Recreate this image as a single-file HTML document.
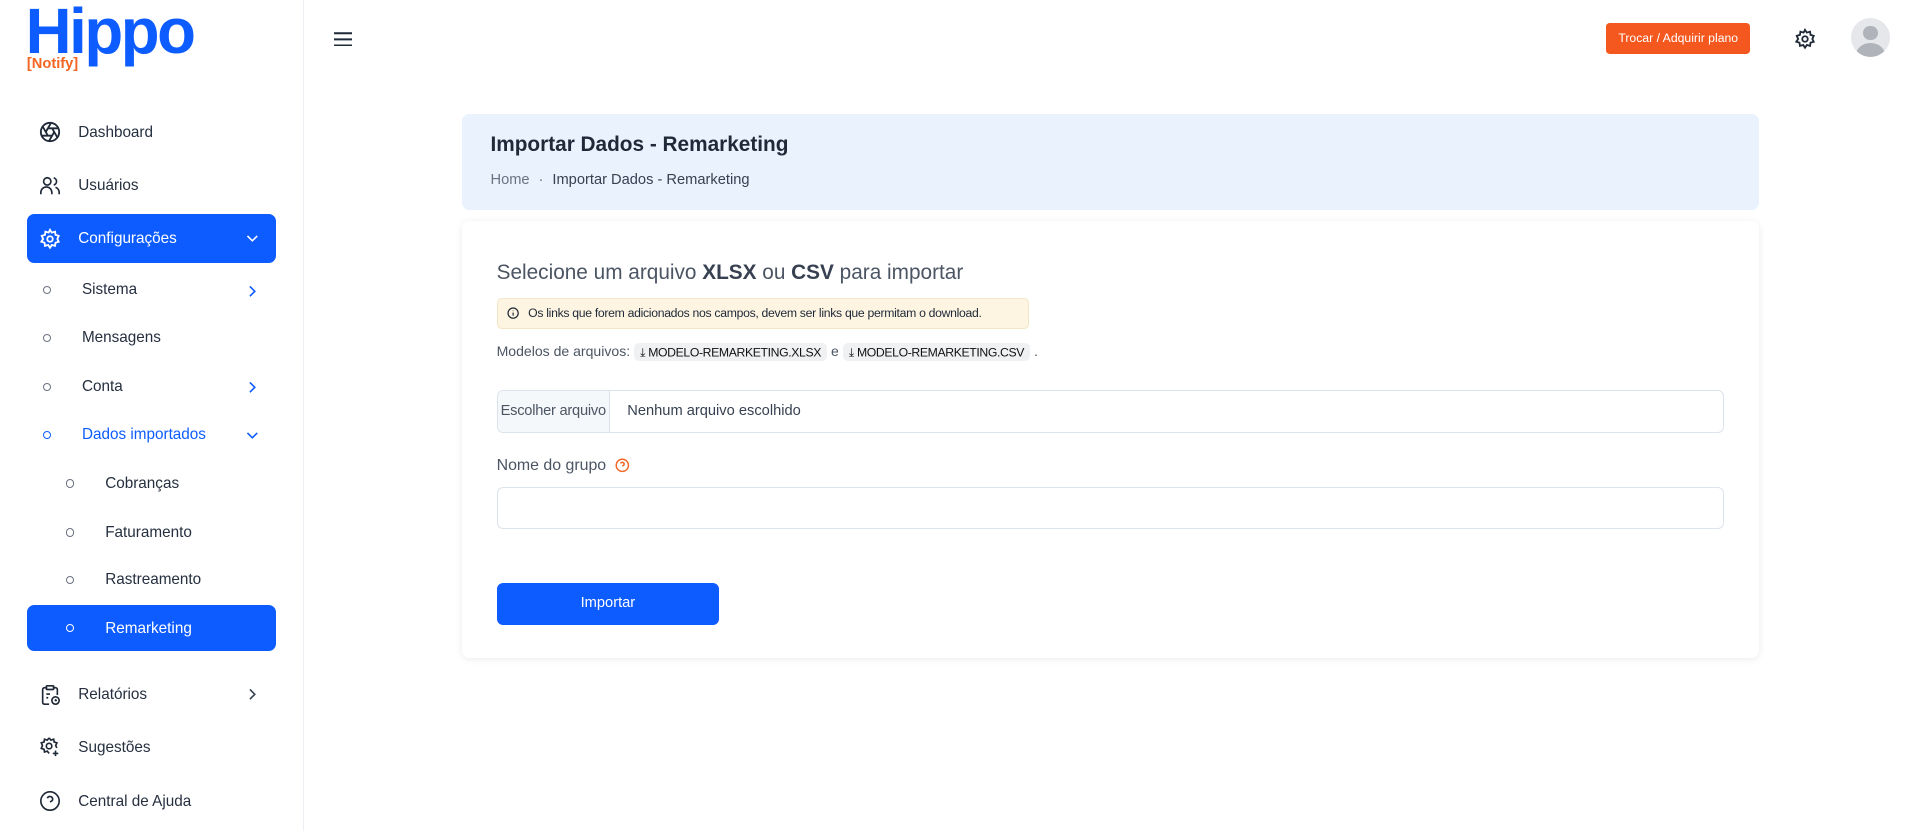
<!DOCTYPE html>
<html><head><meta charset="utf-8">
<style>
html,body{margin:0;padding:0;background:#fff;}
body{width:1568px;height:679px;zoom:1.2232;position:relative;overflow:hidden;font-family:"Liberation Sans",sans-serif;color:#374151;}
.abs{position:absolute;white-space:nowrap;}
.side{left:0;top:0;width:248px;height:679px;border-right:1px solid #eceff3;background:#fff;}
.mi{position:absolute;left:22px;width:204px;height:40px;font-size:12.5px;color:#252f3f;}
.mi .ic{position:absolute;left:10px;top:11px;width:18px;height:18px;}
.mi .t{position:absolute;left:42px;top:13px;}
.act{background:#0d5cff;color:#fff;border-radius:6px;}
.sub .c{position:absolute;top:17px;width:5px;height:5px;border:1px solid #6b7280;border-radius:50%;}
.chev{position:absolute;right:14px;top:14px;}
</style></head><body>
<div class="abs side">
  <div class="abs" style="left:21px;top:-4px;font-size:52px;font-weight:bold;color:#0d5cff;letter-spacing:-2px;">Hippo</div>
  <div class="abs" style="left:22px;top:46px;font-size:12px;font-weight:bold;color:#f26522;background:#fff;padding-right:2px;">[Notify]</div>

  <div class="mi" style="top:88px"><svg class="ic" viewBox="0 0 24 24" fill="none" stroke="#1f2937" stroke-width="2"><circle cx="12" cy="12" r="10"/><path d="M14.3 8l5.7 9.9M9.7 8h11.5M7.4 12l5.7-9.9M9.7 16L4 6.1M14.3 16H2.8M16.6 12l-5.7 9.9"/></svg><span class="t">Dashboard</span></div>
  <div class="mi" style="top:132px"><svg class="ic" viewBox="0 0 24 24" fill="none" stroke="#1f2937" stroke-width="1.8"><circle cx="9" cy="7" r="4"/><path d="M2 21v-2a6 6 0 0 1 12 0v2M16 3.1a4 4 0 0 1 0 7.8M22 21v-2a6 6 0 0 0-4-5.6"/></svg><span class="t">Usuários</span></div>
  <div class="mi act" style="top:175px"><svg class="ic" viewBox="0 0 24 24" fill="none" stroke="#fff" stroke-width="2"><circle cx="12" cy="12" r="3"/><path d="M12 2l2 3 3.5-1 .5 3.5 3.5 1-1.5 3.5 1.5 3-3.5 1-.5 3.5-3.5-1-2 3-2-3-3.5 1-.5-3.5-3.5-1L4.5 12 3 8.5l3.5-1L7 4l3.5 1z"/></svg><span class="t">Configurações</span><svg class="chev" width="12" height="12" viewBox="0 0 12 12" fill="none" stroke="#fff" stroke-width="1.3"><path d="M2 4l4 4 4-4"/></svg></div>

  <div class="mi sub" style="top:217px"><span class="c" style="left:13px"></span><span class="t" style="left:45px">Sistema</span><svg class="chev" width="12" height="12" viewBox="0 0 12 12" fill="none" stroke="#0d5cff" stroke-width="1.3" style="top:15px"><path d="M4 2l4 4-4 4"/></svg></div>
  <div class="mi sub" style="top:256px"><span class="c" style="left:13px"></span><span class="t" style="left:45px">Mensagens</span></div>
  <div class="mi sub" style="top:296px"><span class="c" style="left:13px"></span><span class="t" style="left:45px">Conta</span><svg class="chev" width="12" height="12" viewBox="0 0 12 12" fill="none" stroke="#0d5cff" stroke-width="1.3" style="top:15px"><path d="M4 2l4 4-4 4"/></svg></div>
  <div class="mi sub" style="top:335px;color:#0d5cff"><span class="c" style="left:13px;border-color:#0d5cff"></span><span class="t" style="left:45px">Dados importados</span><svg class="chev" width="12" height="12" viewBox="0 0 12 12" fill="none" stroke="#0d5cff" stroke-width="1.3" style="top:15px"><path d="M2 4l4 4 4-4"/></svg></div>
  <div class="mi sub" style="top:375px"><span class="c" style="left:32px"></span><span class="t" style="left:64px">Cobranças</span></div>
  <div class="mi sub" style="top:415px"><span class="c" style="left:32px"></span><span class="t" style="left:64px">Faturamento</span></div>
  <div class="mi sub" style="top:454px"><span class="c" style="left:32px"></span><span class="t" style="left:64px">Rastreamento</span></div>
  <div class="mi sub act" style="top:495px;height:37px"><span class="c" style="left:32px;top:15px;border-color:#fff"></span><span class="t" style="left:64px;top:12px">Remarketing</span></div>

  <div class="mi" style="top:548px"><svg class="ic" viewBox="0 0 24 24" fill="none" stroke="#1f2937" stroke-width="1.8"><path d="M9 4H6a2 2 0 0 0-2 2v14a2 2 0 0 0 2 2h5M15 4h3a2 2 0 0 1 2 2v6"/><rect x="8" y="2" width="8" height="4" rx="1"/><path d="M8 11h4M8 15h2"/><circle cx="18" cy="18" r="4"/><path d="M18 16.5V18h1.5"/></svg><span class="t">Relatórios</span><svg class="chev" width="12" height="12" viewBox="0 0 12 12" fill="none" stroke="#374151" stroke-width="1.3" style="top:14px"><path d="M4 2l4 4-4 4"/></svg></div>
  <div class="mi" style="top:591px"><svg class="ic" viewBox="0 0 24 24" fill="none" stroke="#1f2937" stroke-width="1.8"><circle cx="11" cy="11" r="3"/><path d="M11 2l2 2.5 3-1 .5 3 3 1-1.3 3 1.3 2.5M11 2L9 4.5l-3-1-.5 3-3 1 1.3 3-1.3 3 3 1 .5 3 3-1 2 2.5M18 16v6M15 19h6"/></svg><span class="t">Sugestões</span></div>
  <div class="mi" style="top:635px"><svg class="ic" viewBox="0 0 24 24" fill="none" stroke="#1f2937" stroke-width="1.8"><circle cx="12" cy="12" r="10"/><path d="M9.1 9a3 3 0 0 1 5.8 1c0 2-3 3-3 3M12 17h.01"/></svg><span class="t">Central de Ajuda</span></div>
</div>

<svg class="abs" style="left:273px;top:26px" width="15" height="12" viewBox="0 0 15 12" stroke="#1f2937" stroke-width="1.6"><path d="M0 1h15M0 6h15M0 11h15"/></svg>
<div class="abs" style="left:1313px;top:19px;width:118px;height:25px;background:#f5581e;border-radius:3px;color:#fff;font-size:10px;text-align:center;line-height:25px;">Trocar / Adquirir plano</div>
<svg class="abs" style="left:1467px;top:23px" width="18" height="18" viewBox="0 0 24 24" fill="none" stroke="#1f2937" stroke-width="2"><circle cx="12" cy="12" r="3"/><path d="M12 2l2 3 3.5-1 .5 3.5 3.5 1-1.5 3.5 1.5 3-3.5 1-.5 3.5-3.5-1-2 3-2-3-3.5 1-.5-3.5-3.5-1L4.5 12 3 8.5l3.5-1L7 4l3.5 1z"/></svg>
<div class="abs" style="left:1513px;top:15px;width:32px;height:32px;border-radius:50%;background:#e5e7eb;overflow:hidden;">
  <div class="abs" style="left:10px;top:6px;width:12px;height:12px;border-radius:50%;background:#b0b4ba"></div>
  <div class="abs" style="left:4px;top:20px;width:24px;height:20px;border-radius:50%;background:#b0b4ba"></div>
</div>

<div class="abs" style="left:378px;top:93px;width:1060px;height:79px;background:#eaf2fe;border-radius:6px;">
  <div class="abs" style="left:23px;top:16px;font-size:17px;font-weight:bold;color:#1f2937;">Importar Dados - Remarketing</div>
  <div class="abs" style="left:23px;top:48px;font-size:12px;color:#6b7280;">Home <span style="margin:0 4px">·</span> <span style="color:#374151">Importar Dados - Remarketing</span></div>
</div>

<div class="abs" style="left:378px;top:181px;width:1060px;height:357px;background:#fff;border-radius:6px;box-shadow:0 1px 6px rgba(0,0,0,0.08);">
  <div class="abs" style="left:28px;top:32px;font-size:17px;color:#4b5563;">Selecione um arquivo <b style="color:#374151">XLSX</b> ou <b style="color:#374151">CSV</b> para importar</div>
  <div class="abs" style="left:28px;top:63px;width:434px;height:23px;background:#fdf4e2;border:1px solid #f3e6c6;border-radius:4px;font-size:10px;color:#1f2937;line-height:23px;">
    <svg style="position:absolute;left:8px;top:6px" width="10" height="10" viewBox="0 0 12 12" fill="none" stroke="#1f2937" stroke-width="1.2"><circle cx="6" cy="6" r="5"/><path d="M6 5.5v3M6 3.5v.5"/></svg>
    <span style="position:absolute;left:25px;letter-spacing:-0.25px">Os links que forem adicionados nos campos, devem ser links que permitam o download.</span></div>
  <div class="abs" style="left:28px;top:97px;font-size:11.5px;color:#4b5563;line-height:18px;">Modelos de arquivos: <span style="background:#f0f1f3;border-radius:4px;padding:2px 5px;font-size:10px;color:#111;letter-spacing:-0.3px">⤓ MODELO-REMARKETING.XLSX</span> e <span style="background:#f0f1f3;border-radius:4px;padding:2px 5px;font-size:10px;color:#111;letter-spacing:-0.3px">⤓ MODELO-REMARKETING.CSV</span> .</div>
  <div class="abs" style="left:28px;top:138px;width:1002px;height:33px;border:1px solid #dde3ec;border-radius:5px;overflow:hidden;font-size:12px;">
    <div class="abs" style="left:0;top:0;width:91px;height:33px;background:#f5f8fb;border-right:1px solid #dde3ec;color:#4b5563;text-align:center;line-height:33px;letter-spacing:-0.2px">Escolher arquivo</div>
    <div class="abs" style="left:106px;top:0;line-height:33px;color:#374151;">Nenhum arquivo escolhido</div>
  </div>
  <div class="abs" style="left:28px;top:193px;font-size:13px;color:#4b5563;">Nome do grupo <svg style="vertical-align:-2px;margin-left:4px" width="12" height="12" viewBox="0 0 24 24" fill="none" stroke="#f26522" stroke-width="2.4"><circle cx="12" cy="12" r="10"/><path d="M9.1 9a3 3 0 0 1 5.8 1c0 2-3 3-3 3M12 17h.01"/></svg></div>
  <div class="abs" style="left:28px;top:217px;width:1002px;height:33px;border:1px solid #dde3ec;border-radius:5px;"></div>
  <div class="abs" style="left:28px;top:296px;width:182px;height:34px;background:#0d5cff;border-radius:5px;color:#fff;font-size:12px;text-align:center;line-height:34px;">Importar</div>
</div>
</body></html>
